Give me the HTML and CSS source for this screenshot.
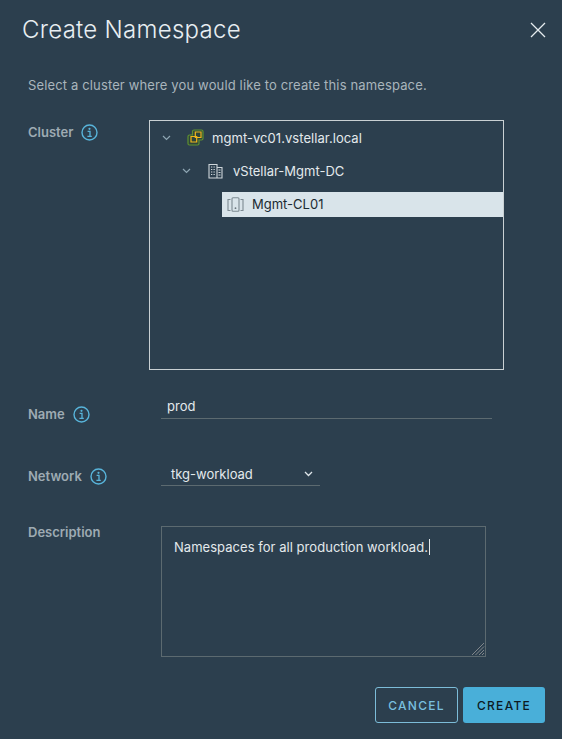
FILE: index.html
```html
<!DOCTYPE html>
<html lang="en">
<head>
<meta charset="utf-8">
<title>Create Namespace</title>
<link rel="stylesheet" href="styles.css">
</head>
<body>
<main class="dialog">
  <header class="head">
    <h1 class="title">Create Namespace</h1>
    <svg class="close" width="16" height="16" viewBox="0 0 16 16"><path d="M1 1l14 14M15 1L1 15" stroke="#e6ecef" stroke-width="1.3" fill="none"/></svg>
  </header>
  <p class="intro">Select a cluster where you would like to create this namespace.</p>

  <section class="row row-cluster">
    <div class="label label-cluster">Cluster
      <svg class="info" width="17" height="17" viewBox="0 0 17 17"><circle cx="8.5" cy="8.5" r="7.5" fill="none" stroke="#58b4da" stroke-width="1.4"/><circle cx="8.5" cy="4.8" r="1.1" fill="#58b4da"/><path d="M6.6 7.400h2.400v4.800M6.400 12.400h4.400" fill="none" stroke="#58b4da" stroke-width="1.300"/></svg>
    </div>
    <div class="tree">
      <div class="node node-1">
        <svg class="chev" width="9" height="6" viewBox="0 0 9 6"><path d="M1 1l3.500 3.500L8 1" fill="none" stroke="#8fa6b3" stroke-width="1.200"/></svg>
        <svg class="icon-vc" width="17" height="17" viewBox="0 0 17 17"><path d="M5.500 2.500Q5.500 1 7 1h7.500Q16 1 16 2.500v7q0 1.500-1.500 1.500H12v3.500q0 1.500-1.500 1.500h-8Q1 16 1 14.500v-7Q1 6 2.500 6h3z" fill="#2d453a" stroke="#5f9130" stroke-width="1.200"/><path d="M8.300 3h5.700v5.500H8.300zM4 7.500h5.700V13H4z" fill="none" stroke="#f0b71c" stroke-width="1.200"/></svg>
        <span class="node-text">mgmt-vc01.vstellar.local</span>
      </div>
      <div class="node node-2">
        <svg class="chev" width="9" height="6" viewBox="0 0 9 6"><path d="M1 1l3.500 3.500L8 1" fill="none" stroke="#8fa6b3" stroke-width="1.200"/></svg>
        <svg class="icon-dc" width="15" height="16" viewBox="0 0 15 16"><path d="M1 1.500h8v13.500H1zM9 4.500h5V15H9" fill="none" stroke="#cfd6da" stroke-width="1.100"/><path d="M3 4h1.300M5.500 4h1.300M3 6.500h1.300M5.500 6.500h1.300M3 9h1.300M5.500 9h1.300M3 11.500h1.300M5.500 11.500h1.300M10.500 7h2M10.500 9.500h2M10.500 12h2" stroke="#cfd6da" stroke-width="1.200"/></svg>
        <span class="node-text">vStellar-Mgmt-DC</span>
      </div>
      <div class="node node-3">
        <svg class="icon-cl" width="17" height="15" viewBox="0 0 17 15"><path d="M3.500 2.500H1v11h2.500M13.500 2.500H16v11h-2.500" fill="none" stroke="#7d8a92" stroke-width="1.100"/><rect x="5" y="0.700" width="7" height="13.600" rx="1" fill="none" stroke="#7d8a92" stroke-width="1.100"/><circle cx="8.500" cy="11.200" r="0.900" fill="#6a767d"/></svg>
        <span class="node-text-sel">Mgmt-CL01</span>
      </div>
    </div>
  </section>

  <section class="row row-name">
    <div class="label label-name">Name
      <svg class="info" width="17" height="17" viewBox="0 0 17 17"><circle cx="8.500" cy="8.500" r="7.500" fill="none" stroke="#58b4da" stroke-width="1.400"/><circle cx="8.500" cy="4.800" r="1.100" fill="#58b4da"/><path d="M6.600 7.400h2.400v4.800M6.400 12.400h4.400" fill="none" stroke="#58b4da" stroke-width="1.300"/></svg>
    </div>
    <div class="input">prod</div>
  </section>

  <section class="row row-network">
    <div class="label label-network">Network
      <svg class="info" width="17" height="17" viewBox="0 0 17 17"><circle cx="8.500" cy="8.500" r="7.500" fill="none" stroke="#58b4da" stroke-width="1.400"/><circle cx="8.500" cy="4.800" r="1.100" fill="#58b4da"/><path d="M6.600 7.400h2.400v4.800M6.400 12.400h4.400" fill="none" stroke="#58b4da" stroke-width="1.300"/></svg>
    </div>
    <div class="select"><span>tkg-workload</span>
      <svg width="9" height="6" viewBox="0 0 9 6"><path d="M1 1l3.500 3.500L8 1" fill="none" stroke="#dfe6ea" stroke-width="1.300"/></svg>
    </div>
  </section>

  <section class="row row-desc">
    <div class="label label-desc">Description</div>
    <div class="textarea">
      <span class="ta-text">Namespaces for all production workload.</span><span class="caret"></span>
      <svg class="grip" width="14" height="14" viewBox="0 0 14 14"><path d="M13 1L1 13M13 4.500L4.500 13M13 8L8 13M13 11L11 13" stroke="#8a8f92" stroke-width="0.900"/></svg>
    </div>
  </section>

  <footer class="foot">
    <div class="btn btn-cancel">CANCEL</div>
    <div class="btn btn-create">CREATE</div>
  </footer>
</main>
</body>
</html>
```
FILE: styles.css
```css
html, body { margin: 0; padding: 0; }
body {
  width: 562px;
  height: 739px;
  overflow: hidden;
  background: #2c3f4e;
  font-family: Inter, "Noto Sans", sans-serif;
  color: #dfe6ea;
}
.dialog { display: flex; flex-direction: column; height: 739px; box-sizing: border-box; padding: 0 17px 16px 0; }
.head { display: flex; justify-content: space-between; align-items: center; padding: 14px 0 0 22px; height: 32px; }
.title { margin: 0; font-size: 24px; line-height: 32px; font-weight: 300; color: #e8eef2; letter-spacing: 0.27px; }
.close { margin-right: -1px; }
.intro { margin: 29px 0 0 28px; font-size: 13px; line-height: 20px; color: #a9b5bc; letter-spacing: 0.14px; }
.row { display: flex; align-items: flex-start; }
.row-cluster { margin-top: 25px; }
.label { display: flex; align-items: center; gap: 8px; font-size: 13px; font-weight: 600; line-height: 20px; color: #9eabb3; padding-left: 28px; width: 133px; flex: none; }
.label-cluster { width: 121px; height: 22px; margin-top: 1px; }
.tree { width: 355px; height: 250px; box-sizing: border-box; border: 1px solid #c9d0d3; display: flex; flex-direction: column; }
.node { display: flex; align-items: center; height: 33px; font-size: 13px; color: #e3e9ec; }
.node-1 { padding-left: 12px; }
.node-1 .chev { margin-right: 16px; }
.node-1 .node-text { margin-left: 8px; letter-spacing: 0.05px; }
.node-2 { padding-left: 32px; }
.node-2 .chev { margin-right: 17px; }
.node-2 .node-text { margin-left: 10px; }
.node-3 { height: 25px; margin: 5px 0 0 72px; padding-left: 5px; background: #d9e4ea; }
.node-text-sel { margin: 0 0 2px 8px; font-size: 13px; color: #1b2a32; }
.row-name { margin-top: 24px; }
.label-name { padding-top: 10px; }
.input { width: 325px; height: 24px; border-bottom: 1px solid #5c6a70; padding-left: 6px; font-size: 13px; line-height: 24px; color: #e3e9ec; }
.row-network { margin-top: 37px; }
.label-network { padding-top: 5px; }
.select { width: 159px; height: 24px; border-bottom: 1px solid #5c6a70; display: flex; align-items: center; justify-content: space-between; font-size: 13px; color: #e3e9ec; }
.select span { margin: 2px 0 0 10px; }
.select svg { margin: 2px 7px 0 0; }
.row-desc { margin-top: 36px; }
.textarea { position: relative; width: 325px; height: 131px; margin-top: 4px; box-sizing: border-box; border: 1px solid #5c6a70; padding: 10px 12px; font-size: 13px; line-height: 20px; letter-spacing: 0.04px; color: #e3e9ec; }
.caret { display: inline-block; width: 1px; height: 16px; background: #e3e9ec; vertical-align: -3px; margin-left: 1px; }
.grip { position: absolute; right: 0; bottom: 0; }
.foot { display: flex; justify-content: flex-end; gap: 5px; margin-top: auto; }
.btn { height: 36px; box-sizing: border-box; border-radius: 3px; display: flex; align-items: center; justify-content: center; font-size: 12px; letter-spacing: 1.3px; }
.btn-cancel { width: 83px; border: 1px solid #7cbcd8; color: #79bfdf; font-weight: 500; }
.btn-create { width: 82px; background: #49afd9; color: #0d1a22; font-weight: 500; }
```
